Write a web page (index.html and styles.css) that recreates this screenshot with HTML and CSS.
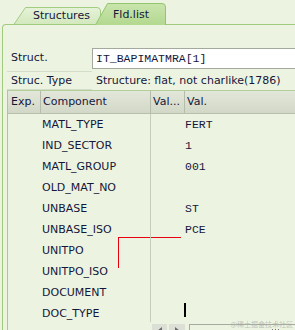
FILE: index.html
```html
<!DOCTYPE html>
<html>
<head>
<meta charset="utf-8">
<link rel="stylesheet" href="styles.css">
</head>
<body>
<div class="screen">
  <div class="tabs">
    <div class="tab tab-inactive">
      <svg class="tab-shape" width="88" height="18" viewBox="0 0 88 18">
        <defs>
          <linearGradient id="gInactive" x1="0" y1="0" x2="0" y2="1">
            <stop offset="0" stop-color="#e6f2d9"/>
            <stop offset="1" stop-color="#d2e8bc"/>
          </linearGradient>
        </defs>
        <path d="M0.5 18 L12.5 0.5 L84 0.5 Q87.5 0.5 87.5 4 L87.5 18" fill="url(#gInactive)" stroke="#a2cc82" stroke-width="1"/>
      </svg>
      <span class="tab-label">Structures</span>
    </div>
    <div class="tab tab-active">
      <svg class="tab-shape" width="71" height="22" viewBox="0 0 71 22">
        <defs>
          <linearGradient id="gActive" x1="0" y1="0" x2="0" y2="1">
            <stop offset="0" stop-color="#c9e5ad"/>
            <stop offset="1" stop-color="#b3d88f"/>
          </linearGradient>
        </defs>
        <path d="M0.5 22 L12.5 0.5 L67 0.5 Q70.5 0.5 70.5 4 L70.5 22" fill="url(#gActive)" stroke="#95c470" stroke-width="1"/>
      </svg>
      <span class="tab-label">Fld.list</span>
    </div>
  </div>

  <div class="panel">
    <div class="form-row row-struct">
      <div class="form-label">Struct.</div>
      <div class="form-input">IT_BAPIMATMRA[1]</div>
    </div>
    <div class="form-row row-type">
      <div class="form-label">Struc. Type</div>
      <div class="form-value">Structure: flat, not charlike(1786)</div>
    </div>

    <div class="table">
      <div class="thead">
        <div class="th th-exp">Exp.</div>
        <div class="th th-comp">Component</div>
        <div class="th th-val1">Val...</div>
        <div class="th th-val2">Val.</div>
      </div>
      <div class="tbody">
        <div class="tr"><div class="td"></div><div class="td comp">MATL_TYPE</div><div class="td"></div><div class="td val">FERT</div></div>
        <div class="tr"><div class="td"></div><div class="td comp">IND_SECTOR</div><div class="td"></div><div class="td val">1</div></div>
        <div class="tr"><div class="td"></div><div class="td comp">MATL_GROUP</div><div class="td"></div><div class="td val">001</div></div>
        <div class="tr"><div class="td"></div><div class="td comp">OLD_MAT_NO</div><div class="td"></div><div class="td val"></div></div>
        <div class="tr"><div class="td"></div><div class="td comp">UNBASE</div><div class="td"></div><div class="td val">ST</div></div>
        <div class="tr"><div class="td"></div><div class="td comp">UNBASE_ISO</div><div class="td"></div><div class="td val">PCE</div></div>
        <div class="tr"><div class="td"></div><div class="td comp">UNITPO</div><div class="td"></div><div class="td val"></div></div>
        <div class="tr"><div class="td"></div><div class="td comp">UNITPO_ISO</div><div class="td"></div><div class="td val"></div></div>
        <div class="tr"><div class="td"></div><div class="td comp">DOCUMENT</div><div class="td"></div><div class="td val"></div></div>
        <div class="tr"><div class="td"></div><div class="td comp">DOC_TYPE</div><div class="td"></div><div class="td val"><span class="caret"></span></div></div>
      </div>
      <div class="hscroll">
        <div class="sbtn sbtn-left"><svg width="6" height="8" viewBox="0 0 6 8"><path d="M5 0 L0 4 L5 8 Z" fill="#6a6a6a"/></svg></div>
        <div class="sbtn sbtn-right"><svg width="6" height="8" viewBox="0 0 6 8"><path d="M1 0 L6 4 L1 8 Z" fill="#6a6a6a"/></svg></div>
        <div class="strack"><span class="sdots"><i></i><i></i><i></i></span></div>
      </div>
    </div>
  </div>

  <div class="annot"></div>
  <div class="watermark">@稀土掘金技术社区</div>
</div>
</body>
</html>
```

FILE: styles.css
```css
* { box-sizing: border-box; }
html, body { margin: 0; padding: 0; }
body {
  background: #ecf4e1;
  font-family: "DejaVu Sans", Verdana, sans-serif;
  font-size: 11px;
  color: #16163a;
}
.screen {
  position: relative;
  width: 295px;
  height: 330px;
  overflow: hidden;
}

/* tabs */
.tabs {
  display: flex;
  align-items: flex-end;
  height: 25px;
  padding-left: 13px;
}
.tab { position: relative; }
.tab-shape { position: absolute; left: 0; top: 0; display: block; }
.tab-label { position: relative; display: block; white-space: nowrap; }
.tab-inactive { width: 88px; height: 18px; z-index: 0; }
.tab-inactive .tab-label { padding-left: 20px; line-height: 17px; }
.tab-active { width: 71px; height: 22px; margin-left: -6px; z-index: 2; }
.tab-active .tab-label { padding-left: 18px; line-height: 23px; }

/* panel */
.panel {
  position: relative;
  z-index: 1;
  margin-top: -1px;
  margin-left: 2px;
  height: 310px;
  border-left: 1px solid #a0cb7f;
  border-top: 1px solid #a0cb7f;
  border-top-left-radius: 4px;
  padding: 22px 0 0 4px;
}

.form-row { display: flex; }
.form-label {
  width: 85px;
  flex: none;
  padding-left: 4px;
  border-bottom: 1px solid #d4ddc8;
  white-space: nowrap;
}
.row-struct .form-label { height: 25px; padding-top: 4px; line-height: 14px; }
.form-input {
  flex: 1;
  margin-top: 1px;
  height: 21px;
  background: #fff;
  border: 1px solid #a3a99d;
  border-right: none;
  padding-left: 3px;
  font-family: "Liberation Mono", "Courier New", monospace;
  font-size: 11.5px;
  line-height: 19px;
  white-space: nowrap;
}
.row-type .form-label { height: 18px; line-height: 17px; }
.form-value { padding-left: 4px; line-height: 17px; white-space: nowrap; }

/* table */
.table {
  border-top: 1px solid #b2cf9b;
  border-left: 1px solid #abc79b;
}
.thead {
  display: grid;
  grid-template-columns: 33px 110px 34px 1fr;
  height: 23px;
  background: linear-gradient(#e3e7da, #d2d8c7);
  border-bottom: 1px solid #b8c0ad;
}
.th {
  line-height: 22px;
  padding-left: 2px;
  border-right: 1px solid #b5bcaa;
  white-space: nowrap;
  overflow: hidden;
}
.th-exp { padding-left: 3px; }
.th-val2 { border-right: none; }

.tbody { height: 208px; overflow: hidden; }
.tr {
  display: grid;
  grid-template-columns: 33px 110px 34px 1fr;
  height: 21px;
}
.td { line-height: 21px; white-space: nowrap; }
.td.comp { padding-left: 1px; border-right: 1px solid #c6cdbd; }
.td.val {
  font-family: "Liberation Mono", "Courier New", monospace;
  font-size: 11.5px;
}
.caret {
  display: block;
  width: 2px;
  height: 14px;
  margin-left: -1px;
  background: #000;
}

.hscroll {
  display: flex;
  padding-left: 144px;
  padding-top: 2px;
}
.sbtn {
  width: 15px;
  height: 14px;
  background: #dcdfd5;
  display: flex;
  justify-content: center;
  align-items: center;
}
.sbtn-right { width: 16px; margin-left: 2px; }
.strack {
  flex: 1;
  height: 14px;
  margin-left: 4px;
  border: 1px solid #a6aaa0;
  border-right: none;
  position: relative;
}
.sdots {
  position: absolute;
  left: 82px;
  top: 4px;
  display: flex;
  gap: 2px;
}
.sdots i {
  display: block;
  width: 1px;
  height: 1px;
  background: #7a7a7a;
}

/* overlays */
.annot {
  position: absolute;
  left: 118px;
  top: 237px;
  width: 63px;
  height: 31px;
  border-top: 1px solid #e8000c;
  border-left: 1px solid #e8000c;
}
.watermark {
  position: absolute;
  right: 2px;
  top: 320px;
  font-family: "Noto Sans CJK SC", sans-serif;
  font-size: 7px;
  line-height: 8px;
  color: rgba(150, 150, 150, 0.55);
  white-space: nowrap;
}
```
